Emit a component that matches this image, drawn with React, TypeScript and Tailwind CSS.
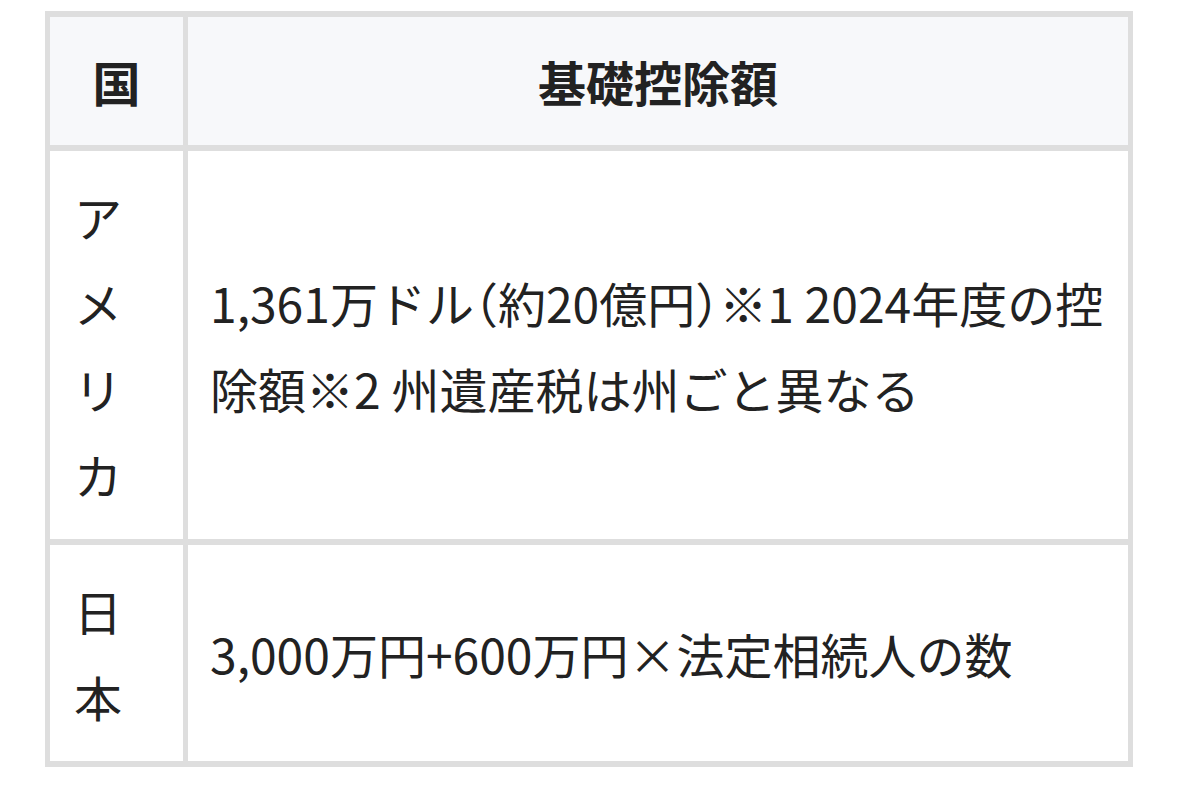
import React from 'react'

const Half = ({ children }: { children: React.ReactNode }) => (
  <span className="[font-feature-settings:'halt']">{children}</span>
)

const rows: { country: string; amount: React.ReactNode }[] = [
  {
    country: 'アメリカ',
    amount: (
      <>
        1,361万ドル<Half>（</Half>約20億円<Half>）</Half>※1 2024年度の控除額※2 州遺産税は州ごと異なる
      </>
    ),
  },
  { country: '日本', amount: '3,000万円+600万円×法定相続人の数' },
]

export default function App() {
  return (
    <div
      className="min-h-[794px] w-[1178px] bg-white pt-[11px] pl-[45px] text-[#222222]"
      style={{ fontFamily: '"Noto Sans CJK JP", "Noto Sans", sans-serif' }}
    >
      <div className="grid w-[1088px] grid-cols-[133px_940px] gap-x-[5px] gap-y-[6px] bg-[#dedede] px-[5px] py-[6px] text-[48px] leading-[86px]">
        <div className="flex items-center justify-center bg-[#f7f8fa] py-[21px] font-bold">国</div>
        <div className="flex items-center justify-center bg-[#f7f8fa] py-[21px] font-bold">基礎控除額</div>
        {rows.map((r) => (
          <React.Fragment key={r.country}>
            <div className="bg-white py-[22px] pl-[24px] pr-[20px] break-all">{r.country}</div>
            <div className="flex items-center bg-white py-[22px] pl-[22px] pr-[14px]">
              <p>{r.amount}</p>
            </div>
          </React.Fragment>
        ))}
      </div>
    </div>
  )
}
